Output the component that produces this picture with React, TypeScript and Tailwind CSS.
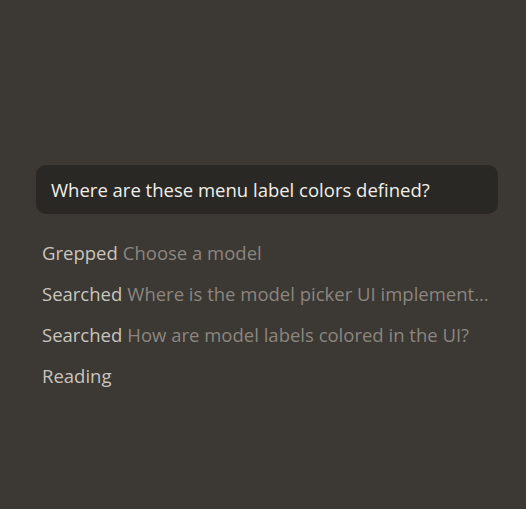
import React from 'react';

const steps = [
  { label: 'Grepped', detail: 'Choose a model' },
  { label: 'Searched', detail: 'Where is the model picker UI implemented?' },
  { label: 'Searched', detail: 'How are model labels colored in the UI?' },
  { label: 'Reading', detail: '' },
];

const App = () => {
  return (
    <div
      className="min-h-screen w-full bg-[#3c3834] pt-[165px] pl-[36px] pr-[28px]"
      style={{ fontFamily: '"Open Sans", "Noto Sans", sans-serif' }}
    >
      <div className="h-[49px] rounded-[10px] bg-[#2a2824] px-[15px] flex items-center text-[18.5px] text-[#f1efea]">
        Where are these menu label colors defined?
      </div>

      <div className="mt-[18px] pl-[6px] flex flex-col">
        {steps.map((s, i) => (
          <div key={i} className="h-[41px] flex items-center text-[18.5px] whitespace-nowrap overflow-hidden">
            <span className="text-[#c9c5be] shrink-0">{s.label}</span>
            {s.detail && (
              <span className="ml-[5px] text-[#8b867f] truncate">{s.detail}</span>
            )}
          </div>
        ))}
      </div>
    </div>
  );
};

export default App;
